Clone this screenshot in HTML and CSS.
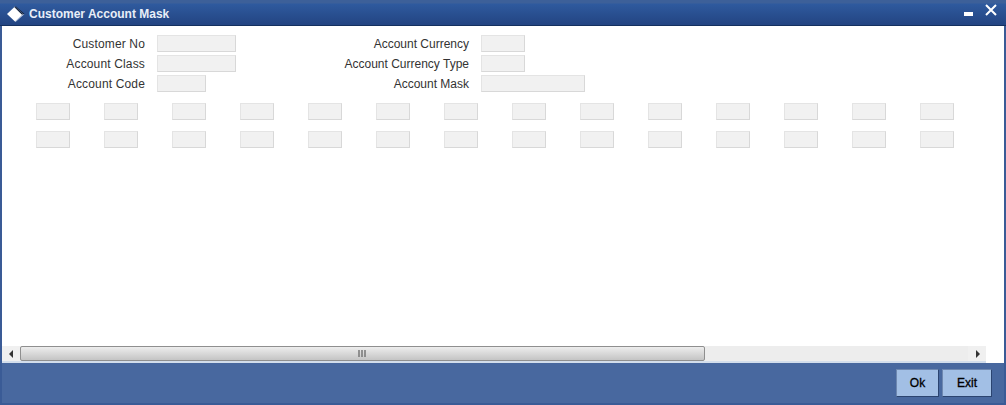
FILE: index.html
```html
<!DOCTYPE html>
<html lang="en">
  <head>
    <meta charset="UTF-8" />
    <title>Customer Account Mask</title>
    <link rel="stylesheet" href="styles.css">
  </head>
  <body>
    <div class="window">
      <header class="titlebar">
        <div class="title">
          <svg class="logo" width="18" height="16" viewBox="0 0 18 16">
            <path d="M8.5 0 L17.5 8 L15.5 9 L8 2 Z" fill="#0c1e3c" />
            <path d="M15.5 8.5 L17.5 8 L8.5 16 L8 15.5 Z" fill="#c3d0e6" />
            <path d="M8 0.5 L16 8 L8 15.5 L0 8 Z" fill="#fff" />
            <path d="M8 0.5 L16 8 L15 8.8 L7.4 1.3 Z" fill="#0c1e3c" />
          </svg>
          <h1>Customer Account Mask</h1>
        </div>
        <div class="controls">
          <svg class="minimize" width="9" height="4" viewBox="0 0 9 4"><rect width="9" height="4" fill="#fff" /></svg>
          <svg width="12" height="12" viewBox="0 0 12 12"><path d="M1 1 L11 11 M11 1 L1 11" stroke="#fff" stroke-width="2" /></svg>
        </div>
      </header>

      <main class="content">
        <form class="fields">
          <div class="col col-left">
            <label class="row"><span>Customer No</span><input class="w-79" type="text" /></label>
            <label class="row"><span>Account Class</span><input class="w-79" type="text" /></label>
            <label class="row"><span>Account Code</span><input class="w-49" type="text" /></label>
          </div>
          <div class="col col-right">
            <label class="row"><span>Account Currency</span><input class="w-44" type="text" /></label>
            <label class="row"><span>Account Currency Type</span><input class="w-44" type="text" /></label>
            <label class="row"><span>Account Mask</span><input class="w-104" type="text" /></label>
          </div>
        </form>

        <div class="mask-grid">
          <input type="text" /><input type="text" /><input type="text" /><input type="text" /><input type="text" /><input type="text" /><input type="text" />
          <input type="text" /><input type="text" /><input type="text" /><input type="text" /><input type="text" /><input type="text" /><input type="text" />
          <input type="text" /><input type="text" /><input type="text" /><input type="text" /><input type="text" /><input type="text" /><input type="text" />
          <input type="text" /><input type="text" /><input type="text" /><input type="text" /><input type="text" /><input type="text" /><input type="text" />
        </div>
      </main>

      <div class="scrollbar">
        <div class="arrow"><svg width="5" height="8" viewBox="0 0 5 8"><path d="M4 0 L4 8 L0 4 Z" fill="#333" /></svg></div>
        <div class="track">
          <div class="thumb">
            <svg width="9" height="7" viewBox="0 0 9 7"><path d="M1 0 V7 M4 0 V7 M7 0 V7" stroke="#777" stroke-width="1.5" /></svg>
          </div>
        </div>
        <div class="arrow"><svg width="5" height="8" viewBox="0 0 5 8"><path d="M1 0 L1 8 L5 4 Z" fill="#333" /></svg></div>
      </div>

      <footer class="footer">
        <button class="btn-ok" type="button">Ok</button>
        <button class="btn-exit" type="button">Exit</button>
      </footer>
    </div>
  </body>
</html>
```

FILE: styles.css
```css
html,
body {
  margin: 0;
  padding: 0;
  height: 405px;
  overflow: hidden;
}

body {
  font-family: "Liberation Sans", Arial, sans-serif;
  font-size: 12px;
  color: #333;
  background-color: #fff;
}

.window {
  box-sizing: border-box;
  height: 405px;
  display: flex;
  flex-direction: column;
  border-left: 2px solid #3a5b96;
  border-right: 2px solid #3a5b96;
  border-bottom: 2px solid #3a5b96;
  background-color: #fff;
}

.titlebar {
  box-sizing: border-box;
  height: 26px;
  margin: 0 -2px;
  padding: 3px 9px 0 7px;
  display: flex;
  justify-content: space-between;
  align-items: center;
  background: linear-gradient(#3d6099 0, #3d6099 3px, #2f5a9e 4px, #234583 24px);
  border-bottom: 1px solid #14305f;
}

.title {
  display: flex;
  align-items: center;
  gap: 4px;
}

.titlebar h1 {
  margin: 0;
  font-size: 12px;
  font-weight: bold;
  color: #e8eef8;
}

.controls {
  display: flex;
  align-items: flex-start;
  gap: 12px;
  margin-top: -9px;
}

.minimize {
  margin-top: 8px;
}

.content {
  flex: 1;
  padding: 9px 0 0 34px;
}

.fields {
  display: flex;
}

.col {
  display: flex;
  flex-direction: column;
  gap: 3px;
}

.col-left {
  width: 247px;
  margin-left: -34px;
  letter-spacing: 0.15px;
}

.row {
  display: flex;
  align-items: center;
  gap: 12px;
  height: 17px;
}

.row span {
  text-align: right;
}

.col-left .row span {
  width: 143px;
}

.col-right .row span {
  width: 220px;
}

input {
  box-sizing: border-box;
  height: 17px;
  margin: 0;
  padding: 0;
  border: 1px solid #e4e4e4;
  border-right-color: #d8d8d8;
  border-bottom-color: #d8d8d8;
  background-color: #f1f1f1;
}

.w-79 {
  width: 79px;
}

.w-49 {
  width: 49px;
}

.w-44 {
  width: 44px;
}

.w-104 {
  width: 104px;
}

.mask-grid {
  display: grid;
  grid-template-columns: repeat(14, 34px);
  column-gap: 34px;
  row-gap: 11px;
  margin-top: 11px;
}

.mask-grid input {
  width: 34px;
}

.scrollbar {
  box-sizing: border-box;
  height: 17px;
  margin-right: 18px;
  display: flex;
  align-items: stretch;
  background-color: #ededed;
  border-bottom: 2px solid #d3deec;
}

.arrow {
  width: 18px;
  flex: none;
  display: flex;
  align-items: center;
  justify-content: center;
  background-color: #f0f0f0;
}

.track {
  flex: 1;
}

.thumb {
  box-sizing: border-box;
  width: 685px;
  height: 100%;
  display: flex;
  align-items: center;
  justify-content: center;
  border: 1px solid #8f8f8f;
  border-radius: 2px;
  background: linear-gradient(#ededed, #c4c4c4);
}

.footer {
  box-sizing: border-box;
  height: 40px;
  display: flex;
  justify-content: flex-end;
  align-items: flex-start;
  gap: 3px;
  padding: 6px 12px 0 0;
  background-color: #48689f;
}

.footer button {
  box-sizing: border-box;
  height: 28px;
  padding: 0;
  font-family: "Liberation Sans", Arial, sans-serif;
  font-size: 12px;
  color: #000;
  -webkit-text-stroke: 0.3px #000;
  background-color: #a2bfe5;
  border: 1px solid #2b4470;
  border-top-color: #6d87b0;
  border-left-color: #6d87b0;
}

.btn-ok {
  width: 43px;
}

.btn-exit {
  width: 50px;
}
```
